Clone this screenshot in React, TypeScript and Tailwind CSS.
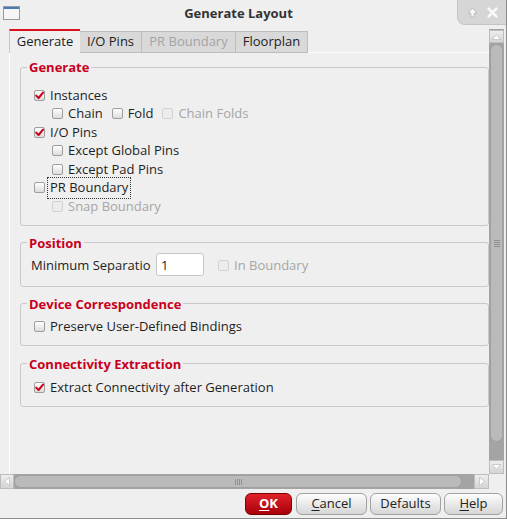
import React from "react";

const Check = () => (
  <svg width="9" height="9" viewBox="0 0 9 9" className="block">
    <path d="M1.2 4.6 L3.6 7 L8 1.6" fill="none" stroke="#c8001a" strokeWidth="2" strokeLinecap="round" strokeLinejoin="round" />
  </svg>
);

function CB({ checked = false, disabled = false }: { checked?: boolean; disabled?: boolean }) {
  return disabled ? (
    <span className="w-[11px] h-[11px] shrink-0 rounded-[2px] border border-[#d2d2d2] bg-[#ececec] flex items-center justify-center" />
  ) : (
    <span className="w-[11px] h-[11px] shrink-0 rounded-[2px] border border-[#9e9e9e] bg-gradient-to-b from-[#ffffff] to-[#dcdcdc] flex items-center justify-center">
      {checked && <Check />}
    </span>
  );
}

function Row({ children, className = "" }: { children: React.ReactNode; className?: string }) {
  return <div className={"h-[18.5px] flex items-center " + className}>{children}</div>;
}

function Label({ children, disabled = false }: { children: React.ReactNode; disabled?: boolean }) {
  return disabled ? (
    <span className="ml-[5px] text-[#a6a6a6] whitespace-nowrap">{children}</span>
  ) : (
    <span className="ml-[5px] text-[#1e1e1e] whitespace-nowrap">{children}</span>
  );
}

function Group({ title, children, className = "" }: { title: string; children: React.ReactNode; className?: string }) {
  return (
    <fieldset className={"w-[469px] border border-[#c9c9c9] rounded-[3px] " + className}>
      <legend className="ml-[6px] px-[2px] text-[#c8001e] font-bold leading-[18px]">{title}</legend>
      {children}
    </fieldset>
  );
}

function Btn({ w, children, red = false }: { w: string; children: React.ReactNode; red?: boolean }) {
  return red ? (
    <div className={w + " h-[22px] rounded-[6px] border border-[#7a0000] bg-gradient-to-b from-[#e0202a] to-[#a80008] text-white font-bold flex items-center justify-center"}>
      {children}
    </div>
  ) : (
    <div className={w + " h-[22px] rounded-[6px] border border-[#a2a2a2] bg-gradient-to-b from-[#fdfdfd] to-[#d6d6d6] text-[#222] flex items-center justify-center"}>
      {children}
    </div>
  );
}

export default function App() {
  return (
    <div className="w-[507px] h-[519px] bg-[#efefef] flex flex-col overflow-hidden border-r border-b border-[#8c8c8c] font-['Open_Sans',sans-serif] text-[13px]">
      {/* Title bar */}
      <div className="h-[29px] flex items-start shrink-0">
        <div className="mt-[6px] ml-[3px] w-[17px] h-[14px] border border-[#9a9a9a] bg-[#f6f6f6] flex flex-col">
          <div className="h-[2px] bg-[#4a78b8]" />
        </div>
        <div className="flex-1 h-[29px] flex items-center justify-center font-bold text-[#333] text-[13px] pb-[1px]">
          Generate Layout
        </div>
        <div className="w-[49px] h-[25px] bg-[#d6d6d6] rounded-bl-[8px] border-l border-b border-[#c4c4c4] flex items-center justify-around px-[4px]">
          <svg width="11" height="11" viewBox="0 0 10 10">
            <path d="M5 1 L9 5.5 H6.5 V9 H3.5 V5.5 H1 Z" fill="#fafafa" stroke="#a8a8a8" strokeWidth="0.6" />
          </svg>
          <svg width="11" height="11" viewBox="0 0 10 10">
            <path d="M1.5 1.5 L8.5 8.5 M8.5 1.5 L1.5 8.5" stroke="#fafafa" strokeWidth="2.2" strokeLinecap="round" />
          </svg>
        </div>
      </div>

      {/* Scroll area */}
      <div className="h-[445px] flex shrink-0">
        <div className="w-[489px] overflow-hidden flex flex-col pl-[9px]">
          {/* Tabs */}
          <div className="h-[24px] flex items-end shrink-0">
            <div className="w-[71px] h-[24px] bg-[#efefef] border-t-2 border-[#d81020] border-l border-l-[#c8c8c8] flex items-center justify-center text-[#1e1e1e]">
              Generate
            </div>
            <div className="w-[62px] h-[22px] bg-[#d9d9d9] border border-[#bdbdbd] border-l-0 flex items-center justify-center text-[#1e1e1e]">
              I/O Pins
            </div>
            <div className="w-[94px] h-[22px] bg-[#d9d9d9] border border-[#bdbdbd] border-l-0 flex items-center justify-center text-[#a4a4a4]">
              PR Boundary
            </div>
            <div className="w-[72px] h-[22px] bg-[#d9d9d9] border border-[#bdbdbd] border-l-0 flex items-center justify-center text-[#1e1e1e]">
              Floorplan
            </div>
            <div className="flex-1 h-[1px] bg-[#ffffff]" />
          </div>
          {/* Panel */}
          <div className="flex-1 border-l border-white pl-[10px] pt-[5px] flex flex-col">
            <Group title="Generate">
              <div className="pt-[10px] pb-[9px] pl-[13px]">
                <Row>
                  <CB checked />
                  <Label>Instances</Label>
                </Row>
                <Row className="pl-[18px]">
                  <CB />
                  <Label>Chain</Label>
                  <span className="w-[9px]" />
                  <CB />
                  <Label>Fold</Label>
                  <span className="w-[9px]" />
                  <CB disabled />
                  <Label disabled>Chain Folds</Label>
                </Row>
                <Row>
                  <CB checked />
                  <Label>I/O Pins</Label>
                </Row>
                <Row className="pl-[18px]">
                  <CB />
                  <Label>Except Global Pins</Label>
                </Row>
                <Row className="pl-[18px]">
                  <CB />
                  <Label>Except Pad Pins</Label>
                </Row>
                <Row>
                  <CB />
                  <span className="ml-[2px] px-[2px] h-[22px] border border-dotted border-[#333] flex items-center text-[#1e1e1e] whitespace-nowrap">
                    PR Boundary
                  </span>
                </Row>
                <Row className="pl-[18px]">
                  <CB disabled />
                  <Label disabled>Snap Boundary</Label>
                </Row>
              </div>
            </Group>

            <Group title="Position" className="mt-[8px]">
              <div className="pl-[10px] pt-[2px] pb-[8px]">
                <div className="h-[24px] flex items-center">
                  <span className="text-[#1e1e1e] whitespace-nowrap w-[125px] overflow-hidden">Minimum Separatio</span>
                  <div className="w-[48px] h-[23px] -mt-[2px] bg-white border border-[#c6c6c6] rounded-[3px] flex items-center pl-[4px] pt-[2px] text-[#1e1e1e]">
                    1
                  </div>
                  <span className="w-[14px]" />
                  <CB disabled />
                  <Label disabled>In Boundary</Label>
                </div>
              </div>
            </Group>

            <Group title="Device Correspondence" className="mt-[8px]">
              <div className="pl-[13px] pt-[5px] pb-[9px]">
                <div className="h-[18px] flex items-center">
                  <CB />
                  <Label>Preserve User-Defined Bindings</Label>
                </div>
              </div>
            </Group>

            <Group title="Connectivity Extraction" className="mt-[9px]">
              <div className="pl-[13px] pt-[6px] pb-[9px]">
                <div className="h-[18px] flex items-center">
                  <CB checked />
                  <Label>Extract Connectivity after Generation</Label>
                </div>
              </div>
            </Group>
          </div>
        </div>

        {/* Vertical scrollbar */}
        <div className="w-[15px] bg-[#a4a4a4] flex flex-col pt-[1px]">
          <div className="h-[13px] bg-gradient-to-b from-[#eeeeee] to-[#d4d4d4] border border-[#bdbdbd] flex items-center justify-center">
            <svg width="9" height="6" viewBox="0 0 9 6">
              <path d="M4.5 0.5 L8.5 5.5 H0.5 Z" fill="#ffffff" stroke="#b0b0b0" strokeWidth="0.6" />
            </svg>
          </div>
          <div className="mt-[1px] mx-[1px] h-[398px] bg-[#bababa] rounded-t-[7px] rounded-b-[7px] border border-[#a0a0a0] flex items-center justify-center">
            <div className="w-[6px] flex flex-col gap-[1px]">
              <div className="h-[1px] bg-[#909090]" />
              <div className="h-[1px] bg-[#909090]" />
              <div className="h-[1px] bg-[#909090]" />
              <div className="h-[1px] bg-[#909090]" />
            </div>
          </div>
          <div className="flex-1" />
          <div className="h-[14px] bg-gradient-to-b from-[#eeeeee] to-[#d4d4d4] border border-[#bdbdbd] flex items-center justify-center">
            <svg width="9" height="6" viewBox="0 0 9 6">
              <path d="M0.5 0.5 H8.5 L4.5 5.5 Z" fill="#ffffff" stroke="#b0b0b0" strokeWidth="0.6" />
            </svg>
          </div>
        </div>
      </div>

      {/* Horizontal scrollbar */}
      <div className="h-[15px] flex shrink-0">
        <div className="w-[489px] bg-[#a4a4a4] flex">
          <div className="w-[14px] bg-gradient-to-b from-[#eeeeee] to-[#d4d4d4] border border-[#bdbdbd] flex items-center justify-center">
            <svg width="6" height="9" viewBox="0 0 6 9">
              <path d="M5.5 0.5 V8.5 L0.5 4.5 Z" fill="#ffffff" stroke="#b0b0b0" strokeWidth="0.6" />
            </svg>
          </div>
          <div className="w-[448px] my-[1px] bg-[#bababa] rounded-[7px] border border-[#a0a0a0] flex items-center justify-center">
            <div className="h-[6px] flex gap-[1px]">
              <div className="w-[1px] bg-[#909090]" />
              <div className="w-[1px] bg-[#909090]" />
              <div className="w-[1px] bg-[#909090]" />
              <div className="w-[1px] bg-[#909090]" />
            </div>
          </div>
          <div className="flex-1" />
          <div className="w-[15px] bg-gradient-to-b from-[#eeeeee] to-[#d4d4d4] border border-[#bdbdbd] flex items-center justify-center">
            <svg width="6" height="9" viewBox="0 0 6 9">
              <path d="M0.5 0.5 V8.5 L5.5 4.5 Z" fill="#ffffff" stroke="#b0b0b0" strokeWidth="0.6" />
            </svg>
          </div>
        </div>
        <div className="flex-1 bg-[#efefef]" />
      </div>

      {/* Buttons */}
      <div className="flex-1 flex justify-end items-start pt-[4px] pr-[3px]">
        <Btn w="w-[47px]" red>
          <span className="underline underline-offset-2">O</span>K
        </Btn>
        <span className="w-[4px]" />
        <Btn w="w-[71px]">
          <span className="underline underline-offset-2">C</span>ancel
        </Btn>
        <span className="w-[3px]" />
        <Btn w="w-[71px]">Defaults</Btn>
        <span className="w-[3px]" />
        <Btn w="w-[59px]">
          <span className="underline underline-offset-2">H</span>elp
        </Btn>
      </div>
    </div>
  );
}
